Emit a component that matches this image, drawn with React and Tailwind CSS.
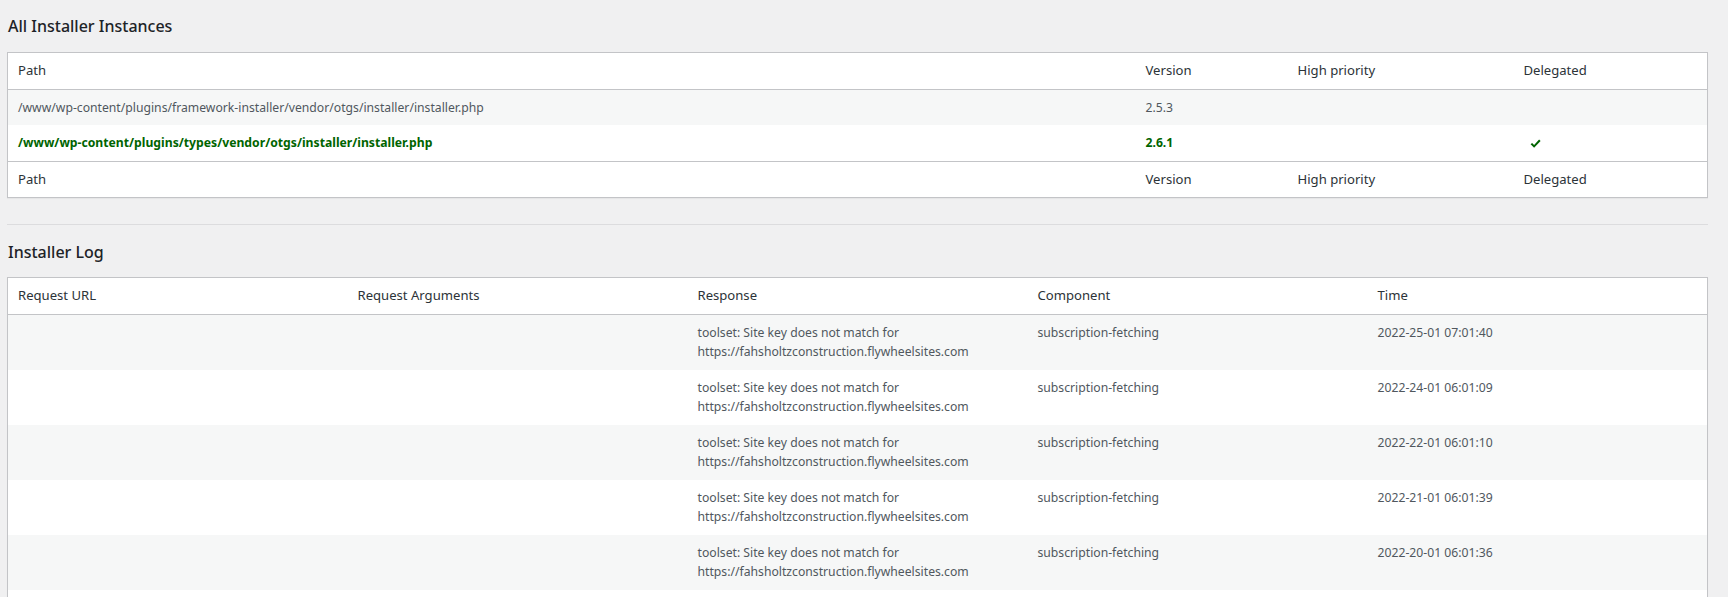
import React from "react";

const th = "px-[10px] py-[8px] text-left align-top text-[13.1px] leading-[19.6px] font-normal text-[#2c3338]";
const td = "px-[10px] py-[8px] text-left align-top text-[12.2px] leading-[19.5px] text-[#50575e]";

function Check() {
  return (
    <svg width="11" height="10" viewBox="0 0 11 10" className="ml-[6px] inline-block align-middle">
      <path d="M0.6 5.3 L2.1 3.9 L4.1 5.9 L9.1 0.6 L10.6 2 L4.1 8.8 Z" fill="#006400" />
    </svg>
  );
}

const logs = [
  "2022-25-01 07:01:40",
  "2022-24-01 06:01:09",
  "2022-22-01 06:01:10",
  "2022-21-01 06:01:39",
  "2022-20-01 06:01:36",
  "2022-19-01 06:01:22",
];

export default function App() {
  return (
    <div className="min-h-screen w-full bg-[#f0f0f1] pl-[7px] pt-[15px] font-['Noto_Sans',sans-serif]">
      <h2 className="ml-[1px] text-[16px] leading-[22px] font-medium text-[#1d2327]">All Installer Instances</h2>
      <table className="mt-[15px] w-[1701px] table-fixed border-collapse border border-[#c3c4c7] bg-white shadow-[0_1px_1px_rgba(0,0,0,0.04)]">
        <colgroup>
          <col className="w-[1128px]" />
          <col className="w-[152px]" />
          <col className="w-[226px]" />
          <col className="w-[194px]" />
        </colgroup>
        <thead>
          <tr className="border-b border-[#c3c4c7]">
            <th className={th}>Path</th>
            <th className={th}>Version</th>
            <th className={th}>High priority</th>
            <th className={th}>Delegated</th>
          </tr>
        </thead>
        <tbody>
          <tr className="bg-[#f6f7f7]">
            <td className={td}>/www/wp-content/plugins/framework-installer/vendor/otgs/installer/installer.php</td>
            <td className={td}>2.5.3</td>
            <td className={td}></td>
            <td className={td}></td>
          </tr>
          <tr className="bg-white">
            <td className={td + " !text-[#006400] font-bold"}>/www/wp-content/plugins/types/vendor/otgs/installer/installer.php</td>
            <td className={td + " !text-[#006400] font-bold"}>2.6.1</td>
            <td className={td}></td>
            <td className={td}><Check /></td>
          </tr>
        </tbody>
        <tfoot>
          <tr className="border-t border-[#c3c4c7]">
            <th className={th}>Path</th>
            <th className={th}>Version</th>
            <th className={th}>High priority</th>
            <th className={th}>Delegated</th>
          </tr>
        </tfoot>
      </table>

      <div className="mt-[26px] h-px w-[1701px] bg-[#dcdcde]" />

      <h2 className="ml-[1px] mt-[16px] text-[16px] leading-[22px] font-medium text-[#1d2327]">Installer Log</h2>
      <table className="mt-[14px] w-[1701px] table-fixed border-collapse border border-[#c3c4c7] bg-white shadow-[0_1px_1px_rgba(0,0,0,0.04)]">
        <colgroup>
          <col className="w-[340px]" />
          <col className="w-[340px]" />
          <col className="w-[340px]" />
          <col className="w-[340px]" />
          <col className="w-[340px]" />
        </colgroup>
        <thead>
          <tr className="border-b border-[#c3c4c7]">
            <th className={th}>Request URL</th>
            <th className={th}>Request Arguments</th>
            <th className={th}>Response</th>
            <th className={th}>Component</th>
            <th className={th}>Time</th>
          </tr>
        </thead>
        <tbody>
          {logs.map((t, i) => (
            <tr key={t} className={i % 2 === 0 ? "bg-[#f6f7f7]" : "bg-white"}>
              <td className={td}></td>
              <td className={td}></td>
              <td className={td}>
                toolset: Site key does not match for
                <br />
                https://fahsholtzconstruction.flywheelsites.com
              </td>
              <td className={td}>subscription-fetching</td>
              <td className={td}>{t}</td>
            </tr>
          ))}
        </tbody>
      </table>
    </div>
  );
}
